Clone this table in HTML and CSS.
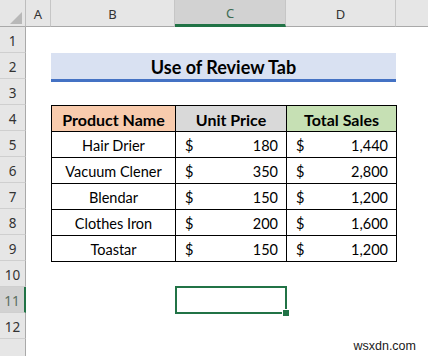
FILE: index.html
```html
<!DOCTYPE html>
<html>
<head>
<meta charset="utf-8">
<link rel="stylesheet" href="styles.css">
</head>
<body>
<div class="sheet">
  <div class="corner"><span class="tri"></span></div>
  <div class="ch">A</div>
  <div class="ch">B</div>
  <div class="ch sel">C</div>
  <div class="ch">D</div>
  <div class="ch last"></div>

  <div class="rh">1</div>
  <div class="rh">2</div>
  <div class="rh">3</div>
  <div class="rh">4</div>
  <div class="rh">5</div>
  <div class="rh">6</div>
  <div class="rh">7</div>
  <div class="rh">8</div>
  <div class="rh">9</div>
  <div class="rh">10</div>
  <div class="rh rsel">11</div>
  <div class="rh">12</div>
  <div class="rh"></div>

  <div class="title">Use of Review Tab</div>

  <div class="tbl">
    <div class="th th-name">Product Name</div>
    <div class="th th-price">Unit Price</div>
    <div class="th th-sales">Total Sales</div>

    <div class="td name">Hair Drier</div>
    <div class="td num"><span>$</span><span>180</span></div>
    <div class="td num"><span>$</span><span>1,440</span></div>

    <div class="td name">Vacuum Clener</div>
    <div class="td num"><span>$</span><span>350</span></div>
    <div class="td num"><span>$</span><span>2,800</span></div>

    <div class="td name">Blendar</div>
    <div class="td num"><span>$</span><span>150</span></div>
    <div class="td num"><span>$</span><span>1,200</span></div>

    <div class="td name">Clothes Iron</div>
    <div class="td num"><span>$</span><span>200</span></div>
    <div class="td num"><span>$</span><span>1,600</span></div>

    <div class="td name">Toastar</div>
    <div class="td num"><span>$</span><span>150</span></div>
    <div class="td num"><span>$</span><span>1,200</span></div>
  </div>

  <div class="selcell"><span class="handle"></span></div>
</div>
<div class="watermark">wsxdn.com</div>
</body>
</html>
```

FILE: styles.css
```css
html, body {
  margin: 0;
  padding: 0;
  background: #ffffff;
  width: 428px;
  height: 356px;
  overflow: hidden;
  position: relative;
}

.sheet {
  display: grid;
  grid-template-columns: 26px 25px 124px 111px 110px 1fr;
  grid-template-rows: 27px repeat(13, 26px);
  width: 428px;
  font-family: Lato, "Noto Sans", sans-serif;
}

.corner {
  grid-column: 1;
  grid-row: 1;
  background: #e6e6e6;
  border-right: 1px solid #bdbdbd;
  border-bottom: 1px solid #a9a9a9;
  position: relative;
}
.corner .tri {
  position: absolute;
  right: 3px;
  bottom: 2px;
  width: 12px;
  height: 12px;
  background: #b8b8b8;
  clip-path: polygon(100% 0, 100% 100%, 0 100%);
}

.ch {
  grid-row: 1;
  background: #e6e6e6;
  border-right: 1px solid #c6c6c6;
  border-bottom: 1px solid #a9a9a9;
  display: flex;
  align-items: center;
  justify-content: center;
  font-family: "Noto Sans", sans-serif;
  font-size: 13px;
  color: #333333;
  padding-top: 1px;
}
.ch.sel {
  background: #d2d2d2;
  border-bottom: 3px solid #217346;
  color: #3d6b53;
  padding-top: 2px;
}
.ch.last {
  border-right: none;
}

.rh {
  grid-column: 1;
  background: #e6e6e6;
  border-right: 1px solid #a9a9a9;
  border-bottom: 1px solid #cfcfcf;
  display: flex;
  align-items: center;
  justify-content: center;
  font-family: "Noto Sans", sans-serif;
  font-size: 13.5px;
  color: #333333;
  padding-top: 2px;
}
.rh.rsel {
  background: #d2d2d2;
  border-right: 2px solid #217346;
  color: #5a6e63;
}

.title {
  grid-column: 3 / 6;
  grid-row: 3;
  height: 25px;
  background: #d9e1f2;
  border-bottom: 3px solid #4472c4;
  display: flex;
  align-items: center;
  justify-content: center;
  font-weight: bold;
  font-size: 18px;
  color: #000000;
  padding-top: 1px;
  box-sizing: content-box;
}

.tbl {
  grid-column: 3 / 6;
  grid-row: 5 / 11;
  align-self: start;
  justify-self: start;
  width: 346px;
  box-sizing: border-box;
  display: grid;
  grid-template-columns: 123px 110px 109px;
  grid-auto-rows: 25px;
  gap: 1px;
  padding: 1px;
  background: #000000;
  font-size: 14.5px;
  color: #000000;
}

.th {
  display: flex;
  align-items: center;
  justify-content: center;
  font-weight: bold;
  font-size: 16px;
  padding-top: 1px;
}
.th-name { background: #f8cbad; }
.th-price { background: #d9d9d9; }
.th-sales { background: #c6e0b4; }

.td {
  background: #ffffff;
  display: flex;
  align-items: center;
  padding-top: 1px;
}
.td.name {
  justify-content: center;
}
.td.num {
  justify-content: space-between;
  padding-left: 9px;
  padding-right: 8px;
}

.selcell {
  grid-column: 4;
  grid-row: 12;
  width: 112px;
  box-sizing: border-box;
  border: 2px solid #217346;
  position: relative;
  margin-top: -1px;
  height: 28px;
}
.selcell .handle {
  position: absolute;
  right: -4px;
  bottom: -4px;
  width: 6px;
  height: 6px;
  background: #217346;
  border-left: 1px solid #ffffff;
  border-top: 1px solid #ffffff;
}

.watermark {
  position: absolute;
  right: 12px;
  bottom: 3px;
  font-family: "Liberation Sans", Arial, sans-serif;
  font-size: 12.5px;
  color: #1a1a1a;
}
```
